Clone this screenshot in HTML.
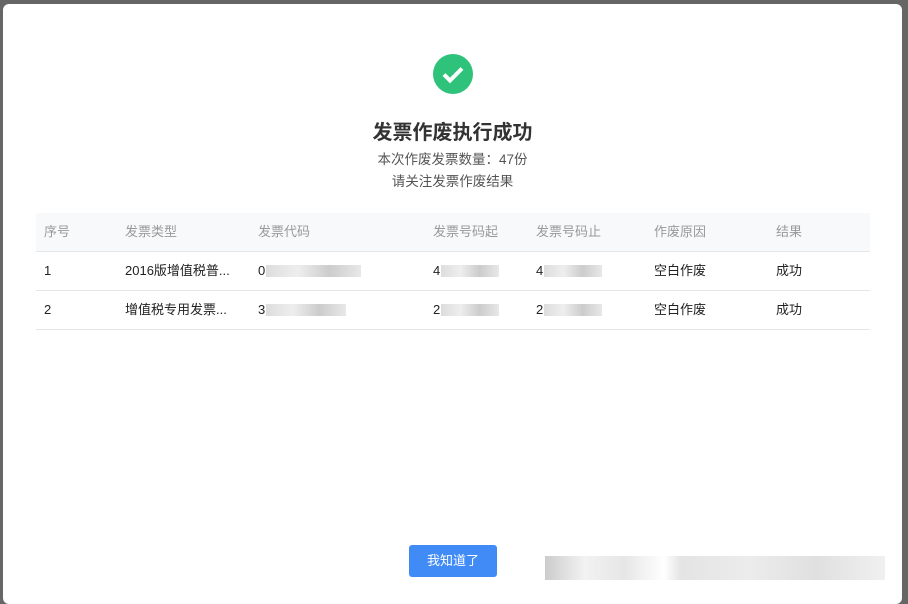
<!DOCTYPE html>
<html><head><meta charset="utf-8"><style>
body{margin:0;width:908px;height:600px;background:#666;position:relative;overflow:hidden;font-family:"Liberation Sans","Noto Sans CJK SC",sans-serif;}
.m{position:absolute;left:3px;top:4px;width:899px;height:600px;background:#fff;border-radius:6px;}
.a{position:absolute;white-space:nowrap;}
.ic{left:430px;top:50px;width:40px;height:40px;border-radius:50%;background:#2ec27a;}
.t{left:0;width:899px;text-align:center;}
.tb{position:absolute;left:33px;top:209px;width:834px;}
.row{position:relative;height:38px;border-bottom:1px solid #e4e6ea;font-size:13px;color:#222;}
.hd{background:#f8f9fb;color:#999;}
.row span{position:absolute;top:10px;line-height:18px;height:18px;}
.bl{position:absolute;top:13px;height:12px;background:linear-gradient(90deg,#ddd,#eee,#ccc,#e8e8e8);}
.btn{left:406px;top:541px;width:88px;height:32px;background:#418bf7;border-radius:3px;color:#fff;font-size:13px;text-align:center;line-height:32px;}
</style></head><body>
<div class="m">
<div class="a ic"><svg width="40" height="40"><path d="M11 20.5l6 6 12-12" stroke="#fff" stroke-width="4" fill="none"/></svg></div>
<div class="a t" style="top:112px;font-size:20px;font-weight:bold;color:#333;">发票作废执行成功</div>
<div class="a t" style="top:144px;font-size:13.5px;color:#555;">本次作废发票数量：47份</div>
<div class="a t" style="top:166px;font-size:13.5px;color:#555;">请关注发票作废结果</div>
<div class="tb">
<div class="row hd"><span style="left:8px">序号</span><span style="left:89px">发票类型</span><span style="left:222px">发票代码</span><span style="left:397px">发票号码起</span><span style="left:500px">发票号码止</span><span style="left:618px">作废原因</span><span style="left:740px">结果</span></div>
<div class="row"><span style="left:8px">1</span><span style="left:89px">2016版增值税普...</span><span style="left:222px">0</span><div class="bl" style="left:230px;width:95px"></div><span style="left:397px">4</span><div class="bl" style="left:405px;width:58px"></div><span style="left:500px">4</span><div class="bl" style="left:508px;width:58px"></div><span style="left:618px">空白作废</span><span style="left:740px">成功</span></div>
<div class="row"><span style="left:8px">2</span><span style="left:89px">增值税专用发票...</span><span style="left:222px">3</span><div class="bl" style="left:230px;width:80px"></div><span style="left:397px">2</span><div class="bl" style="left:405px;width:58px"></div><span style="left:500px">2</span><div class="bl" style="left:508px;width:58px"></div><span style="left:618px">空白作废</span><span style="left:740px">成功</span></div>
</div>
<div class="a btn">我知道了</div>
<div class="a" style="left:542px;top:552px;width:340px;height:24px;background:linear-gradient(90deg,#ccc,#f2f2f2,#e6e6e6,#fff 35%,#e4e4e4 40%,#ececec,#e0e0e0,#f0f0f0);"></div>
</div>
</body></html>
